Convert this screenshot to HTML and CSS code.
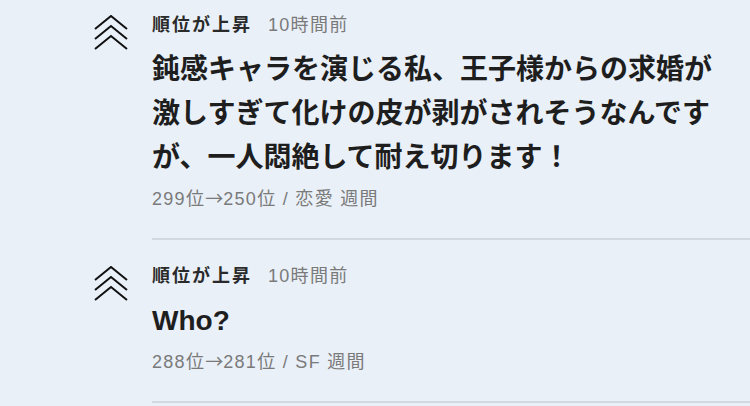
FILE: index.html
```html
<!DOCTYPE html>
<html lang="ja">
<head>
<meta charset="utf-8">
<link rel="stylesheet" href="styles.css">
</head>
<body>
<ul class="feed">
  <li class="item">
    <div class="icon-col">
      <svg class="rise-icon" width="35" height="36" viewBox="0 0 35 36" aria-hidden="true">
        <polyline points="1,14 17,1 33,14"/>
        <polyline points="1,24 17,11 33,24"/>
        <polyline points="1,34 17,21 33,34"/>
      </svg>
    </div>
    <div class="content">
      <div class="head"><span class="label">順位が上昇</span><span class="time">10時間前</span></div>
      <h2 class="title">鈍感キャラを演じる私、王子様からの求婚が激しすぎて化けの皮が剥がされそうなんですが、一人悶絶して耐え切ります！</h2>
      <p class="meta">299位<span class="arrow">→</span>250位 / 恋愛 週間</p>
    </div>
  </li>
  <li class="item">
    <div class="icon-col">
      <svg class="rise-icon" width="35" height="36" viewBox="0 0 35 36" aria-hidden="true">
        <polyline points="1,14 17,1 33,14"/>
        <polyline points="1,24 17,11 33,24"/>
        <polyline points="1,34 17,21 33,34"/>
      </svg>
    </div>
    <div class="content">
      <div class="head"><span class="label">順位が上昇</span><span class="time">10時間前</span></div>
      <h2 class="title">Who?</h2>
      <p class="meta">288位<span class="arrow">→</span>281位 / SF 週間</p>
    </div>
  </li>
</ul>
</body>
</html>
```
FILE: styles.css
```css
html, body {
  margin: 0;
  padding: 0;
  background: #e9f0f8;
}
body {
  font-family: "Liberation Sans", "Noto Sans CJK JP", sans-serif;
  color: #222;
  overflow: hidden;
}
.feed {
  list-style: none;
  margin: -11px 0 0 0;
  padding: 0 0 0 94px;
}
.item {
  display: flex;
  align-items: flex-start;
}
.icon-col {
  width: 58px;
  flex: none;
  padding-top: 26px;
}
.rise-icon {
  display: block;
}
.rise-icon polyline {
  fill: none;
  stroke: #111;
  stroke-width: 2;
}
.content {
  flex: 1;
  padding: 24px 20px 27px 0;
  border-bottom: 2px solid #d3d9de;
}
.head {
  display: flex;
  align-items: center;
  gap: 16px;
  height: 24px;
  line-height: 24px;
}
.label {
  font-size: 18px;
  font-weight: bold;
  letter-spacing: 2px;
  color: #2a2a2a;
}
.time {
  font-size: 18px;
  letter-spacing: 1.3px;
  color: #7a7a7a;
}
.title {
  margin: 11px 0 0 0;
  font-size: 28px;
  line-height: 44px;
  font-weight: bold;
  color: #1e1e1e;
}
.meta {
  margin: 5px 0 0 0;
  font-size: 18px;
  line-height: 24px;
  letter-spacing: 1.3px;
  color: #7a7a7a;
}
.arrow {
  font-family: "Noto Sans CJK JP", sans-serif;
  letter-spacing: 0;
}
```
